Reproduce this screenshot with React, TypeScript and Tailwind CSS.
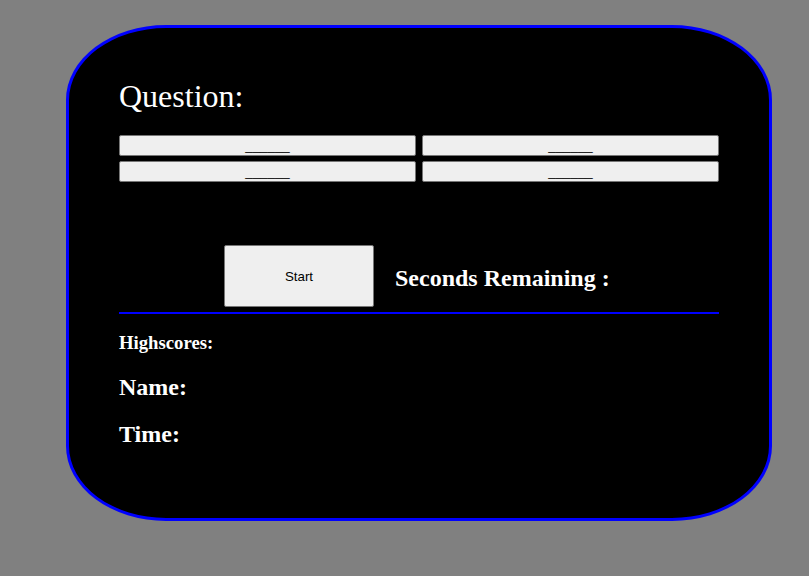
export default function App() {
  return (
    <div className="min-h-screen bg-[#808080] pt-[25px] pl-[66px]">
      {/* Quiz card */}
      <div className="w-[706px] h-[496px] border-[3px] border-[#0000ff] rounded-[100px/75px] bg-black px-[50px] pt-[50px] font-['Liberation_Serif',serif] text-white">
        <h1 className="text-[32px] leading-[37px] font-normal">Question:</h1>

        {/* Answer buttons */}
        <div className="grid grid-cols-2 gap-x-[6px] gap-y-[5px] mt-[20px] font-['Liberation_Sans',Arial,sans-serif] text-[13.33px] text-black">
          <button className="h-[21px] flex items-center justify-center bg-[#efefef] border border-[#767676] rounded-[2px] leading-[15px]">______</button>
          <button className="h-[21px] flex items-center justify-center bg-[#efefef] border border-[#767676] rounded-[2px] leading-[15px]">______</button>
          <button className="h-[21px] flex items-center justify-center bg-[#efefef] border border-[#767676] rounded-[2px] leading-[15px]">______</button>
          <button className="h-[21px] flex items-center justify-center bg-[#efefef] border border-[#767676] rounded-[2px] leading-[15px]">______</button>
        </div>

        {/* Start + timer */}
        <div className="flex items-start mt-[63px]">
          <button className="ml-[105px] w-[150px] h-[62px] flex items-center justify-center bg-[#efefef] border border-[#767676] rounded-[2px] font-['Liberation_Sans',Arial,sans-serif] text-[13.33px] leading-[15px] text-black">
            Start
          </button>
          <h2 className="ml-[21px] mt-[19px] text-[24px] leading-[28px] font-bold">Seconds Remaining :</h2>
        </div>

        <div className="mt-[5px] h-[2px] bg-[#0000ff]" />

        {/* Highscores */}
        <h3 className="mt-[18px] text-[18.72px] leading-[22px] font-bold">Highscores:</h3>
        <h2 className="mt-[19px] text-[24px] leading-[28px] font-bold">Name:</h2>
        <h2 className="mt-[19px] text-[24px] leading-[28px] font-bold">Time:</h2>
      </div>
    </div>
  )
}
